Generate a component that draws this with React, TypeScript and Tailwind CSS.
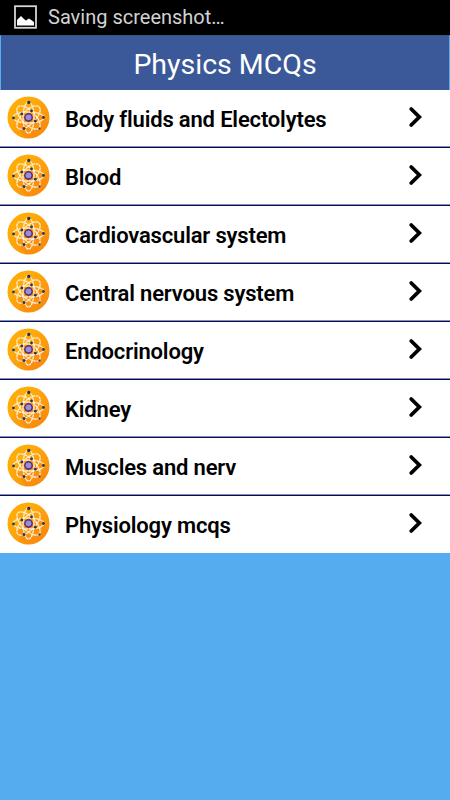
export default function App() {

    const topics = [
        { id: 1, title: "Body fluids and Electolytes" },
        { id: 2, title: "Blood" },
        { id: 3, title: "Cardiovascular system" },
        { id: 4, title: "Central nervous system" },
        { id: 5, title: "Endocrinology" },
        { id: 6, title: "Kidney" },
        { id: 7, title: "Muscles and nerv" },
        { id: 8, title: "Physiology mcqs" }
    ];

    return (
        <div className="flex flex-col w-full h-screen bg-[#55acee] overflow-hidden font-[Roboto,sans-serif]">
            {/* Status bar */}
            <div className="flex items-center shrink-0 h-[35px] bg-black pl-3.5 pb-0.5">
                <svg className="w-[23px] h-[24px]" viewBox="0 0 23 24">
                    <rect x="1" y="1.2" width="21" height="21.6" fill="none" stroke="#d4d4d4" strokeWidth="1.8" />
                    <path d="M3 20.5V15L7 11L10 14L12 15.5L15 13.5L20 17V20.5Z" fill="#fff" />
                </svg>
                <span className="ml-[11px] text-[20px] leading-6 text-[#d2d2d2]">Saving screenshot…</span>
            </div>

            {/* Title */}
            <div className="flex items-center justify-center shrink-0 h-[55px] pt-[3px] bg-[#3b5998] border-x border-t border-x-[#55acee] border-t-[#285c80]">
                <h1 className="text-[28.5px] leading-8 text-white">Physics MCQs</h1>
            </div>

            <ul className="bg-white shrink-0">
                {topics.map((topic) => (
                    <li
                        key={topic.id}
                        className="flex items-center h-[58px] pl-[7px] pr-[27px] border-b border-[#000b62] shadow-[inset_0_-1px_0_#8b8eaa] last:h-[57px] last:border-0 last:shadow-none"
                    >
                        <AtomIcon />
                        <span className="ml-[15px] mt-0.5 grow text-[22px] leading-7 font-semibold tracking-[-0.17px] text-black">{topic.title}</span>
                        <svg className="w-[15px] h-[22px] shrink-0 -mt-[3px]" viewBox="0 0 15 22" fill="none" stroke="#000" strokeWidth="3.8" strokeLinecap="round">
                            <path d="M3.2 3L11.3 11L3.2 19" />
                        </svg>
                    </li>
                ))}
            </ul>
        </div>
    );
}

function AtomIcon() {
    return (
        <svg className="w-[43px] h-[43px] shrink-0 -mt-0.5" viewBox="0 0 43 43">
            <defs>
                <linearGradient id="disc" x1="0" y1="0" x2="1" y2="1">
                    <stop offset="0.3" stopColor="#ffac09" />
                    <stop offset="0.8" stopColor="#fb9110" />
                </linearGradient>
            </defs>
            <circle cx="21.5" cy="21.5" r="21" fill="url(#disc)" />
            <path d="M9 30L19 42.3Q35 42 41 28L32 15Z" fill="#f98c0e" opacity="0.6" />
            <g fill="none" stroke="#fff1d9" strokeWidth="1.3" strokeDasharray="3 0.5">
                <ellipse cx="21.5" cy="21.5" rx="5.5" ry="15.5" />
                <ellipse cx="21.5" cy="21.5" rx="15.5" ry="5.5" />
                <ellipse cx="21.5" cy="21.5" rx="6.8" ry="15" transform="rotate(45 21.5 21.5)" />
                <ellipse cx="21.5" cy="21.5" rx="6.8" ry="15" transform="rotate(135 21.5 21.5)" />
            </g>
            <g fill="#27384a">
                <circle cx="21.8" cy="6.5" r="1.7" />
                <circle cx="24.5" cy="15" r="1.4" />
                <circle cx="14.8" cy="18" r="1.4" />
                <circle cx="6.5" cy="22" r="1.4" />
                <circle cx="36.5" cy="21.5" r="1.4" />
                <circle cx="28.3" cy="25.2" r="1.4" />
                <circle cx="17" cy="32.5" r="1.5" />
                <circle cx="32.5" cy="32.5" r="1.1" />
            </g>
            <circle cx="21.5" cy="21.5" r="4.4" fill="#51307f" />
            <circle cx="21.5" cy="21.3" r="2.9" fill="#a08bd8" />
        </svg>
    );
}
